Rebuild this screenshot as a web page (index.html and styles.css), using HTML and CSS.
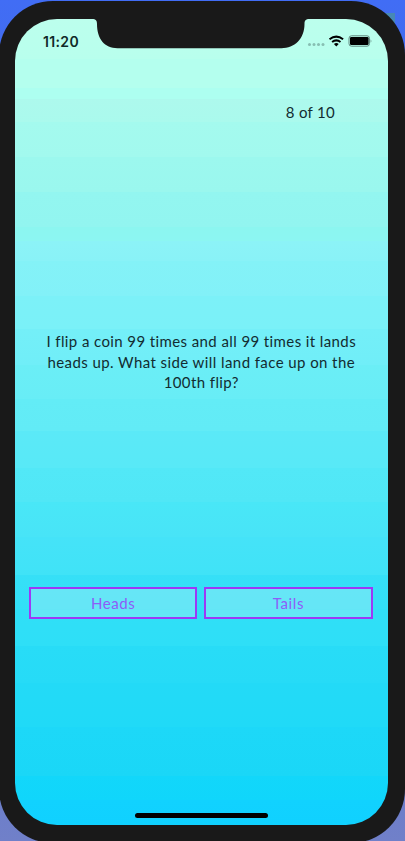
FILE: index.html
```html
<!DOCTYPE html>
<html lang="en">
<head>
<meta charset="utf-8">
<meta name="viewport" content="width=device-width">
<title>Quiz</title>
<link rel="stylesheet" href="styles.css">
</head>
<body>
<div class="desktop-corner"></div>
<div class="phone">
  <main class="screen">
    <svg class="notch" viewBox="0 0 220 30" aria-hidden="true"><path d="M0 0H220C216 0 215 1.500 215 5C215 20 205 29.200 192 29.200H28C15 29.200 7.500 20 7.500 5C7.500 1.500 6.500 0 2.500 0Z" transform="translate(-.5 0)"/></svg>
    <header class="status">
      <span class="time">11:20</span>
      <svg class="indicators" viewBox="0 0 66 14" aria-hidden="true">
        <g class="dots"><circle cx="2.500" cy="9.500" r="1.500"/><circle cx="7" cy="9.500" r="1.500"/><circle cx="11.500" cy="9.500" r="1.500"/><circle cx="16" cy="9.500" r="1.500"/></g>
        <g class="wifi"><path d="M22.500 4.300Q29.300-1 36.100 4.300"/><path d="M25.100 7Q29.300 3.700 33.500 7"/></g>
        <path d="M26.900 9.100Q29.300 7.100 31.700 9.100L29.300 11.400Z"/>
        <rect class="case" x="42" y=".8" width="20.500" height="10.400" rx="2.500"/>
        <rect x="43" y="2" width="18.600" height="8" rx="1.300"/>
        <path class="cap" d="M63.500 4.200Q65.500 6 63.500 7.800Z"/>
      </svg>
    </header>
    <p class="progress">8 of 10</p>
    <p class="question"><span class="line first">I flip a coin 99 times and all 99 times it lands</span><span class="line second">heads up. What side will land face up on the</span><span class="line third">100th flip?</span></p>
    <div class="answers">
      <button class="answer">Heads</button>
      <button class="answer">Tails</button>
    </div>
    <div class="home"></div>
  </main>
</div>
</body>
</html>
```
FILE: styles.css
```css
* { box-sizing: border-box; }
body {
  margin: 0;
  height: 841px;
  overflow: hidden;
  position: relative;
  background: linear-gradient(#416df5, #4667d8 30%, #7080c9);
  font-family: Lato, sans-serif;
  color: #122c30;
}
.desktop-corner {
  position: absolute;
  top: 13px;
  right: 10px;
  width: 12px;
  height: 10px;
  background: #4788b5;
}
.phone {
  position: relative;
  width: 406px;
  height: 842px;
  margin: 1px 0 0 -1px;
  padding: 18px 17.500px 17px 16px;
  border-radius: 54px;
  background: #191919;
}
.screen {
  position: relative;
  display: flex;
  flex-direction: column;
  height: 806px;
  border-radius: 42px;
  overflow: hidden;
  background: linear-gradient(
    #bcffed 0, #b8ffed 40px,
    #b4ffee 40px, #b4ffee 69px,
    #adfff0 69px, #adfff0 80px,
    #adf9ed 80px, #aafaed 103px,
    #a4faee 103px, #a2f9ee 138px,
    #9cf8ee 138px, #9af7ee 173px,
    #93f6f0 173px, #92f5f0 208px,
    #8cf6f0 208px, #8cf6f2 222px,
    #8cf3f7 222px, #89f2f7 242px,
    #84f2f7 242px, #82f1f8 277px,
    #7cf1f8 277px, #7af1f8 310px,
    #74eff8 310px, #70eef8 346px,
    #6beef6 346px, #68edf6 380px,
    #63ecf6 380px, #62ebf6 412px,
    #5be9f7 412px, #58e9f7 449px,
    #52e8f7 449px, #50e7f6 483px,
    #49e7f7 483px, #48e4f7 518px,
    #45e3f8 518px, #40e3f7 556px,
    #36e0f7 556px, #32dff7 590px,
    #30dff7 590px, #2edff7 627px,
    #28dcf7 627px, #26dbf7 664px,
    #23daf7 664px, #20daf7 708px,
    #1dd8f8 708px, #1ad7f7 757px,
    #12d7fa 757px, #10d6fb 781px,
    #11d2ff 781px, #10d1ff 806px);
}
.notch {
  position: absolute;
  top: 0;
  left: 75px;
  width: 220px;
  height: 30px;
  fill: #191919;
}
.status {
  display: flex;
  justify-content: space-between;
  height: 83px;
  padding: 13px 14.500px 0 28px;
}
.time {
  font: 600 14px/19px Inter, sans-serif;
  letter-spacing: .35px;
  color: #102a28;
}
.indicators {
  width: 66px;
  height: 14px;
  margin-top: 3px;
}
.dots { fill: #87bfb2; }
.wifi { fill: none; stroke: #000; stroke-width: 2; }
.case { fill: none; stroke: #62877e; stroke-width: 1; }
.cap { fill: #78a79c; }
p { margin: 0; }
.progress {
  height: 20px;
  padding-right: 52.500px;
  text-align: right;
  font-size: 15px;
  line-height: 20px;
  letter-spacing: .3px;
}
.question {
  margin-top: 209px;
  text-align: center;
  font-size: 15px;
  line-height: 20.700px;
}
.line { display: block; white-space: nowrap; }
.first { letter-spacing: .4px; }
.second { letter-spacing: .42px; }
.third { letter-spacing: .4px; }
.answers {
  display: flex;
  gap: 7px;
  margin: 194px 15px 0 14px;
}
.answer {
  flex: 1;
  height: 32px;
  padding: 0;
  border: 2px solid #9d38f5;
  background: rgba(178, 240, 246, .4);
  color: #8e5cf8;
  font: 15px/27px Lato, sans-serif;
  letter-spacing: .6px;
}
.home {
  width: 133px;
  height: 5px;
  margin: auto auto 7px;
  border-radius: 3px;
  background: #000;
}
```
